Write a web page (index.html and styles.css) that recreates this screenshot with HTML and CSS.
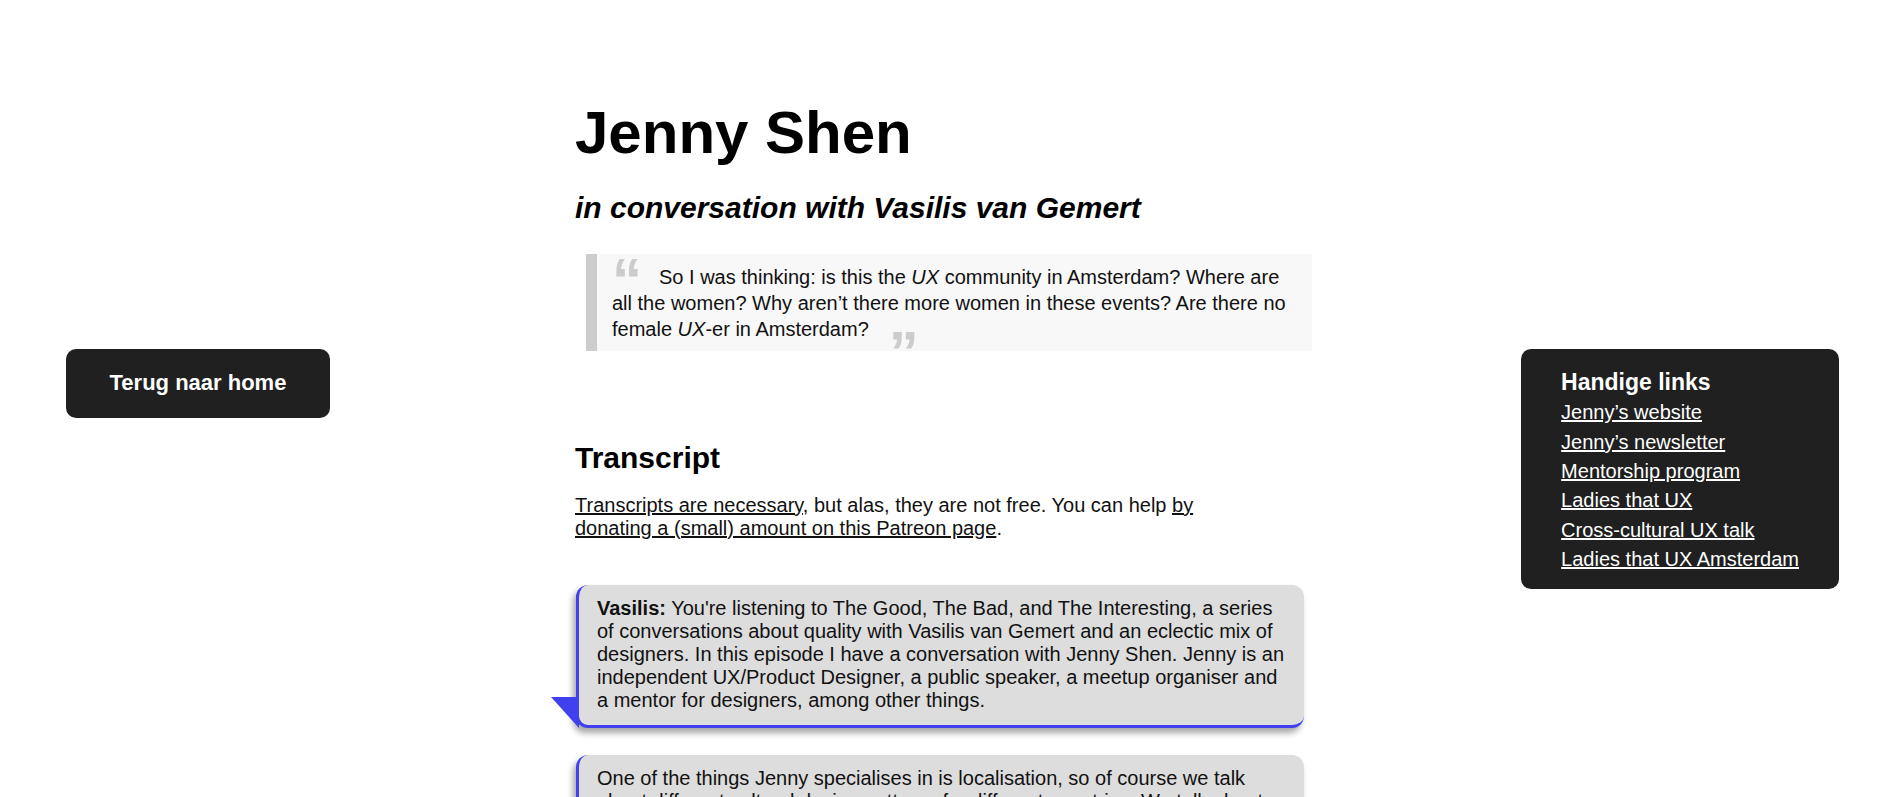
FILE: index.html
```html
<!DOCTYPE html>
<html lang="nl">
<head>
<meta charset="utf-8">
<title>Jenny Shen – in conversation with Vasilis van Gemert</title>
<link rel="stylesheet" href="styles.css">
</head>
<body>
<div class="page">
  <nav class="back">
    <a class="back-link" href="#">Terug naar home</a>
  </nav>

  <main class="content">
    <h1 class="title">Jenny Shen</h1>
    <p class="subtitle">in conversation with Vasilis van Gemert</p>

    <blockquote class="quote">
      <p><span class="qmark qopen">“</span>So I was thinking: is this the <i>UX</i> community in Amsterdam? Where are all the women? Why aren’t there more women in these events? Are there no female <i>UX</i>-er in Amsterdam?<span class="qmark qclose">”</span></p>
    </blockquote>

    <h2 class="section-title">Transcript</h2>
    <p class="intro"><a href="#">Transcripts are necessary</a>, but alas, they are not free. You can help <a href="#">by donating a (small) amount on this Patreon page</a>.</p>

    <div class="bubble">
      <p><b>Vasilis:</b> You're listening to The Good, The Bad, and The Interesting, a series of conversations about quality with Vasilis van Gemert and an eclectic mix of designers. In this episode I have a conversation with Jenny Shen. Jenny is an independent UX/Product Designer, a public speaker, a meetup organiser and a mentor for designers, among other things.</p>
    </div>

    <div class="bubble">
      <p>One of the things Jenny specialises in is localisation, so of course we talk about different cultural design patterns for different countries. We talk about the lack of diversity in the design community, and about how Jenny started Ladies that UX Amsterdam.</p>
    </div>
  </main>

  <aside class="links">
    <h2 class="links-title">Handige links</h2>
    <ul class="links-list">
      <li><a href="#">Jenny’s website</a></li>
      <li><a href="#">Jenny’s newsletter</a></li>
      <li><a href="#">Mentorship program</a></li>
      <li><a href="#">Ladies that UX</a></li>
      <li><a href="#">Cross-cultural UX talk</a></li>
      <li><a href="#">Ladies that UX Amsterdam</a></li>
    </ul>
  </aside>
</div>
</body>
</html>
```

FILE: styles.css
```css
html, body {
  margin: 0;
  padding: 0;
  background: #ffffff;
}

body {
  font-family: "Liberation Sans", Arial, Helvetica, sans-serif;
  font-size: 20px;
  color: #111111;
}

a {
  color: inherit;
}

.page {
  display: grid;
  grid-template-columns: 1fr 746px 1fr;
  align-items: start;
}

/* left: back button */
.back {
  margin-top: 349px;
  padding-left: 66px;
}

.back-link {
  display: flex;
  align-items: center;
  justify-content: center;
  width: 264px;
  height: 69px;
  padding-bottom: 1px;
  box-sizing: border-box;
  background: #202020;
  color: #ffffff;
  font-size: 22px;
  font-weight: bold;
  text-decoration: none;
  border-radius: 10px;
}

/* main column */
.content {
  padding-top: 98px;
  padding-bottom: 60px;
}

.title {
  margin: 0;
  font-size: 60px;
  line-height: 69px;
  font-weight: bold;
  color: #000000;
}

.subtitle {
  margin: 24px 0 0;
  font-size: 30px;
  line-height: 34.5px;
  font-weight: bold;
  font-style: italic;
  color: #000000;
}

.quote {
  margin: 28px 9px 0 11px;
  padding: 10px 15px 9px;
  background: #f8f8f8;
  border-left: 11px solid #cccccc;
}

.quote p {
  margin: 0;
  line-height: 26px;
}

.qmark {
  display: inline-block;
  position: relative;
  font-size: 60px;
  font-weight: bold;
  line-height: 0;
  color: #cccccc;
}

.qopen {
  width: 47px;
  top: 16px;
}

.qclose {
  margin-left: 20px;
  top: 37px;
}

.section-title {
  margin: 90px 0 0;
  font-size: 30px;
  line-height: 34.5px;
  font-weight: bold;
  color: #000000;
}

.intro {
  margin: 19px 0 0;
  max-width: 640px;
  line-height: 23px;
}

.bubble {
  position: relative;
  margin: 45px 17px 0 1px;
  padding: 12px 14px 13px 18px;
  background: #dddddd;
  border-left: 3px solid #4040ee;
  border-bottom: 3px solid #4040ee;
  border-radius: 12px;
  box-shadow: -3px 5px 6px rgba(0, 0, 0, 0.35);
  line-height: 23px;
}

.bubble + .bubble {
  margin-top: 27px;
}

.bubble::before {
  content: "";
  position: absolute;
  left: -28px;
  bottom: -3px;
  width: 0;
  height: 0;
  border-top: 31px solid #4040ee;
  border-left: 28px solid transparent;
}

.bubble p {
  margin: 0;
}

/* right: handy links */
.links {
  justify-self: end;
  margin: 349px 57px 0 0;
  padding: 20px 40px 15px;
  background: #202020;
  color: #ffffff;
  border-radius: 10px;
}

.links-title {
  margin: 0;
  font-size: 23px;
  line-height: 26.4px;
  font-weight: bold;
}

.links-list {
  list-style: none;
  margin: 3px 0 0;
  padding: 0;
  line-height: 29.3px;
}

.links-list a {
  color: #ffffff;
}
```
